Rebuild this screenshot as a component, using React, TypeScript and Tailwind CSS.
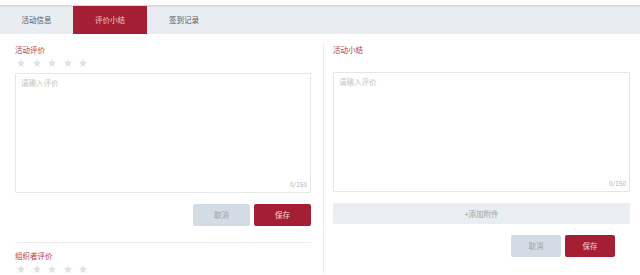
import { useState } from "react";

const TABS = ["活动信息", "评价小结", "签到记录"];

function Star() {
  return (
    <svg viewBox="0 0 24 24" className="h-[10px] w-[10px]" aria-hidden>
      <path
        d="M12 2.5l2.9 6.6 7.1.6-5.4 4.7 1.6 7-6.2-3.7-6.2 3.7 1.6-7L2 9.7l7.1-.6z"
        fill="#e2e2e2"
      />
    </svg>
  );
}

function Stars() {
  return (
    <div className="flex h-[10px] items-center gap-[5.5px] pl-[1px]">
      {[0, 1, 2, 3, 4].map((i) => (
        <Star key={i} />
      ))}
    </div>
  );
}

function Label({ children }: { children: string }) {
  return (
    <div className="h-[12px] text-[7.5px] leading-[12px] text-[#b5394b]">
      {children}
    </div>
  );
}

function TextBox({ h }: { h: string }) {
  return (
    <div className={`relative rounded-[1px] border border-[#e6e6e6] bg-white ${h}`}>
      <span className="absolute left-[5px] top-[3px] text-[7.5px] text-[#c4c4c4]">
        请输入评价
      </span>
      <span className="absolute bottom-[2px] right-[3px] text-[6.5px] text-[#b0b0b0]">
        0/150
      </span>
    </div>
  );
}

function Buttons({ w, h }: { w: string; h: string }) {
  return (
    <div className="flex justify-end gap-[4px]">
      <button
        className={`${w} ${h} rounded-[2px] bg-[#d3dbe4] text-[7.5px] text-[#9ba4ae]`}
      >
        取消
      </button>
      <button
        className={`${w} ${h} rounded-[2px] bg-[#a41f33] text-[7.5px] text-[#f5d9dd]`}
      >
        保存
      </button>
    </div>
  );
}

export default function App() {
  const [tab, setTab] = useState(1);

  return (
    <div className="h-[275px] w-[640px] overflow-hidden bg-white pt-[5px] font-['Noto_Sans_CJK_SC','Noto_Sans',sans-serif]">
      <div className="flex h-[29px] border-t border-[#d5d8dc] bg-[#e9ecf0] shadow-[inset_0_1px_1px_rgba(0,0,0,0.06)]">
        {TABS.map((t, i) => (
          <button
            key={t}
            onClick={() => setTab(i)}
            className={
              (i === 0 ? "w-[73px] " : "w-[74px] ") +
              (i === tab
                ? "bg-[#a41f33] text-[7.5px] text-[#f1c9cf]"
                : "text-[7.5px] text-[#555b61]")
            }
          >
            {t}
          </button>
        ))}
      </div>

      <div className="flex">
        <div className="w-[323px] pl-[15px] pr-[12px] pt-[10px]">
          <Label>活动评价</Label>
          <div className="mt-[2px]">
            <Stars />
          </div>
          <div className="mt-[5px]">
            <TextBox h="h-[120px]" />
          </div>
          <div className="mt-[11px]">
            <Buttons w="w-[57px]" h="h-[22px]" />
          </div>
          <div className="mt-[16px] h-px bg-[#ececec]" />
          <div className="mt-[7px]">
            <Label>组织者评价</Label>
          </div>
          <div className="mt-[2px]">
            <Stars />
          </div>
        </div>

        <div className="mt-[9px] flex-1 border-l border-[#ececec] pl-[9px] pr-[10px] pt-[1px]">
          <Label>活动小结</Label>
          <div className="mt-[16px]">
            <TextBox h="h-[120px]" />
          </div>
          <button className="mt-[11px] h-[21px] w-full rounded-[2px] bg-[#eaedf1] text-[7.5px] text-[#9aa0a6]">
            +添加附件
          </button>
          <div className="mt-[11px] pr-[15px]">
            <Buttons w="w-[50px]" h="h-[22px]" />
          </div>
        </div>
      </div>
    </div>
  );
}
